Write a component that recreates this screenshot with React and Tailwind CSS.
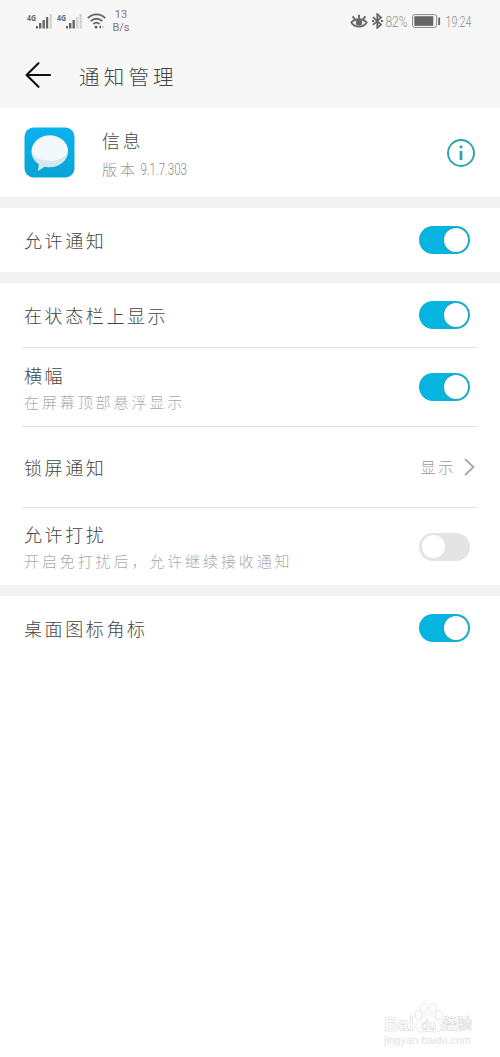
import clsx from 'clsx'

const GROUPS = [
  [{ title: '允许通知', height: 'h-16', on: true }],
  [
    { title: '在状态栏上显示', height: 'h-16', on: true },
    { title: '横幅', note: '在屏幕顶部悬浮显示', height: 'h-[78px]', on: true },
    { title: '锁屏通知', height: 'h-[80px]', value: '显示' },
    { title: '允许打扰', note: '开启免打扰后，允许继续接收通知', height: 'h-[77px]', on: false },
  ],
  [{ title: '桌面图标角标', height: 'h-16', on: true }],
]

const titleCls = 'text-[18px] leading-6 tracking-[2.6px] text-[#444]'
const noteCls = 'text-[15px] leading-5 tracking-[2.9px] text-[#aaa]'

function Signal({ weak }) {
  return (
    <svg className="h-4 w-[26px]" viewBox="0 0 26 16">
      <text x="0" y="7.5" fontSize="8" fontWeight="700" textLength="9" lengthAdjust="spacingAndGlyphs" fill="#666">4G</text>
      <rect x="9" y="13" width="2" height="2.5" fill="#666" />
      <rect x="12" y="10" width="2.4" height="5.5" fill="#666" />
      <rect x="15.5" y="7" width="2.4" height="8.5" fill="#666" />
      <rect x="19" y="4" width="2.2" height="11.5" fill={weak ? '#d2d2d2' : '#666'} />
      <rect x="22.6" y="1" width="2.2" height="14.5" fill="#d2d2d2" />
    </svg>
  )
}

function Wifi() {
  return (
    <svg className="h-4 w-[19px]" viewBox="0 0 19 16" fill="none" stroke="#666" strokeWidth="1.8">
      <path d="M.8 5.2C5.8.2 13.2.2 18.2 5.2M3.7 8.2c3.4-3.3 8.2-3.3 11.6 0M6.3 11c2-1.7 4.3-1.7 6.3 0" />
      <circle cx="9" cy="14" r="1.5" fill="#666" stroke="none" />
      <path d="M14 12.3v3.4L11.6 14z" fill="#666" stroke="none" />
      <path d="M15.3 12.3v3.4l2.4-1.7z" fill="#ccc" stroke="none" />
    </svg>
  )
}

// digits squeezed to a fixed width
function NarrowText({ className, box, y, size, length, children }) {
  return (
    <svg className={clsx('overflow-visible', className)} viewBox={box}>
      <text x=".5" y={y} fontFamily="Roboto, sans-serif" fontSize={size} textLength={length} lengthAdjust="spacingAndGlyphs" fill="#8c8c8c">
        {children}
      </text>
    </svg>
  )
}

function StatusBar() {
  return (
    <div className="flex h-[42px] items-center justify-between pr-7 pl-[27px] text-[#777]">
      <div className="flex items-center">
        <div className="flex items-center gap-1">
          <Signal />
          <Signal weak />
          <Wifi />
        </div>
        <div className="ml-1.5 w-[18px] text-center font-['Roboto'] text-[11px] leading-[13px] font-normal">
          <div>13</div>
          <div>B/s</div>
        </div>
      </div>
      <div className="flex items-center">
        <svg className="h-[17px] w-[18px]" viewBox="0 0 18 17" fill="none" stroke="#666" strokeWidth="1.9">
          <path d="M1.4 9.4C5 5.2 13 5.2 16.6 9.4C13 15 5 15 1.4 9.4z" />
          <circle cx="9" cy="9.6" r="3.2" fill="#666" stroke="none" />
          <path d="M9 1.8v3.6M2.6 3.4l2.2 2.8M15.4 3.4l-2.2 2.8" />
        </svg>
        <svg className="ml-1 h-4 w-[11px]" viewBox="0 0 11 16" fill="none" stroke="#666" strokeWidth="1.8">
          <path d="M1 4.2 9 11.5 5.3 14.8V1.2L9 4.5 1 11.8" />
          <path d="M0 8h2M9 8h2" />
        </svg>
        <NarrowText className="ml-0.5 h-6 w-6" box="0 0 24 24" y="18" size="15" length="22">82%</NarrowText>
        <svg className="ml-[3px] h-[14px] w-[29px]" viewBox="0 0 29 14">
          <rect x=".6" y=".6" width="24" height="12.8" rx="2.2" fill="none" stroke="#888" strokeWidth="1" />
          <rect x="2.3" y="2.2" width="19" height="9.6" fill="#666" />
          <rect x="26.2" y="3.5" width="1.9" height="7.5" rx=".6" fill="#666" />
        </svg>
        <NarrowText className="ml-1 h-6 w-[27px]" box="0 0 27 24" y="18" size="15" length="26">19:24</NarrowText>
      </div>
    </div>
  )
}

function Header() {
  return (
    <header className="h-[108px] bg-[#f7f7f7]">
      <StatusBar />
      <div className="flex h-[66px] items-center pl-[25px]">
        <svg className="h-[26px] w-[26px]" viewBox="0 0 26 26" fill="none" stroke="#111" strokeWidth="2.1" strokeLinecap="round" strokeLinejoin="round">
          <path d="M25 13H1.5M13.5 1.2 1.5 13l12 11.8" />
        </svg>
        <h1 className="ml-[28px] pt-[3px] text-[20.5px] leading-7 tracking-[4.2px] text-[#444]">通知管理</h1>
      </div>
    </header>
  )
}

function AppInfo() {
  return (
    <div className="flex h-[89px] items-center pr-[25px] pl-6">
      <svg className="h-[51px] w-[51px]" viewBox="0 0 51 51">
        <defs>
          <linearGradient id="tile" x2="0" y2="1">
            <stop stopColor="#0bb1ee" />
            <stop offset="1" stopColor="#08a4d5" />
          </linearGradient>
          <clipPath id="bubble">
            <path d="M25.8 8.5c10.3 0 18.2 7 18.2 15.8S36 40.3 25.8 40.3c-1.8 0-3.5-.2-5.2-.6-2.2 1.5-4.3 2.9-6.6 4.3l.8-6.8C10.3 34.4 7.6 30 7.6 24.8 7.6 15.7 15.5 8.5 25.8 8.5z" />
          </clipPath>
        </defs>
        <rect x=".5" y=".5" width="50" height="50" rx="9" fill="url(#tile)" />
        <g clipPath="url(#bubble)">
          <rect width="51" height="51" fill="#d3e8f1" />
          <ellipse cx="25.8" cy="20" rx="19.5" ry="14" fill="#f3f8fc" />
        </g>
      </svg>
      <div className="ml-[27px] grow pt-1">
        <div className={titleCls}>信息</div>
        <div className="mt-1 flex items-center text-[#999]">
          <span className="text-[15px] leading-6 tracking-[3px]">版本</span>
          <NarrowText className="ml-0.5 h-6 w-12" box="0 0 48 24" y="17.5" size="16" length="46.5">9.1.7.303</NarrowText>
        </div>
      </div>
      <svg className="h-7 w-7" viewBox="0 0 28 28" fill="none" stroke="#2aa5ae">
        <circle cx="14" cy="14" r="13" strokeWidth="1.9" />
        <path d="M14 12v9" strokeWidth="2.8" />
        <circle cx="14" cy="7.8" r="1.6" fill="#2aa5ae" stroke="none" />
      </svg>
    </div>
  )
}

function Toggle({ on }) {
  return (
    <button
      role="switch"
      aria-checked={on}
      className={clsx('flex h-7 w-[51px] items-center rounded-full px-[2.5px]', on ? 'justify-end bg-[#06b4e0]' : 'bg-[#e4e4e4]')}
    >
      <span className={clsx('size-[23.5px] rounded-full bg-white', on && 'shadow-[0_0_0_1px_#2aa0b6]')} />
    </button>
  )
}

function Row({ row, last }) {
  return (
    <div className={clsx('mx-[22px] flex items-center justify-between pr-2 pl-0.5', row.height, !last && 'box-content border-b border-[#e2e2e2]')}>
      <div className={clsx(row.note ? 'pt-px' : 'pt-0.5')}>
        <div className={titleCls}>{row.title}</div>
        {row.note && <div className={clsx(noteCls, 'mt-1')}>{row.note}</div>}
      </div>
      {row.value ? (
        <div className="-mr-[5px] flex items-center">
          <span className="text-[15px] tracking-[2.8px] text-[#999]">{row.value}</span>
          <svg className="ml-2 h-[18px] w-[11px]" viewBox="0 0 11 18" fill="none" stroke="#aaa" strokeWidth="1.9">
            <path d="m1 1 8.5 8L1 17" />
          </svg>
        </div>
      ) : (
        <Toggle on={row.on} />
      )}
    </div>
  )
}

function Watermark() {
  return (
    <svg className="absolute right-7 bottom-2 h-[48px] w-[96px]" viewBox="0 0 96 48" fill="#fff" stroke="#dcdcdc" strokeWidth=".7">
      <g fontFamily="Liberation Sans, Noto Sans CJK SC, sans-serif" fontWeight="700">
        <text x="8" y="30" fontSize="21" textLength="30" lengthAdjust="spacingAndGlyphs">Bai</text>
        <ellipse cx="42.5" cy="14" rx="3.2" ry="4.5" />
        <ellipse cx="48" cy="7" rx="3.4" ry="4.8" />
        <ellipse cx="57" cy="7" rx="3.4" ry="4.8" />
        <ellipse cx="63" cy="14" rx="3.2" ry="4.5" />
        <path d="M52.5 13.5c-5 0-6 4.5-10 7.5-5 3.5-3 10.5 3 10 5-.6 9-.6 14 0 6 .5 8-6.500 3-10-4-3-5-7.500-10-7.500z" />
        <text x="45" y="29" fontSize="14" textLength="15" lengthAdjust="spacingAndGlyphs">du</text>
        <text x="66" y="28" fontSize="15">经验</text>
      </g>
      <text x="8" y="43" fontSize="10" fontFamily="Liberation Sans, sans-serif" fontWeight="400" textLength="87" lengthAdjust="spacingAndGlyphs" fill="#e2e2e2" stroke="none">jingyan.baidu.com</text>
    </svg>
  )
}

export default function App() {
  return (
    <div className="relative h-[1057px] w-[500px] overflow-hidden bg-white font-['Noto_Sans','Noto_Sans_CJK_SC',sans-serif] font-light">
      <Header />
      <AppInfo />
      {GROUPS.map((rows, i) => (
        <section key={i} className="border-t-[11px] border-[#f2f2f2]">
          {rows.map((row, j) => (
            <Row key={row.title} row={row} last={j === rows.length - 1} />
          ))}
        </section>
      ))}
      <Watermark />
    </div>
  )
}
